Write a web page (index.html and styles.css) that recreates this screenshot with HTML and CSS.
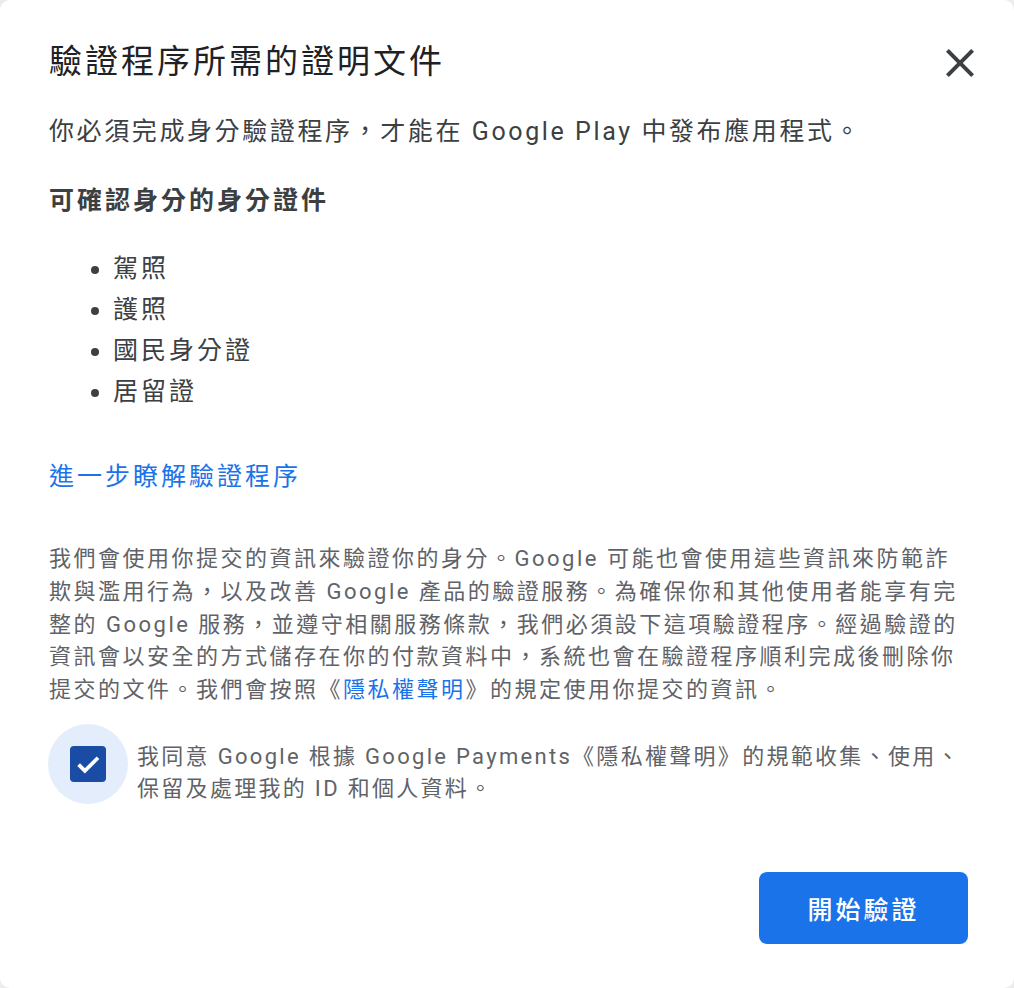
FILE: index.html
```html
<!DOCTYPE html>
<html lang="zh-Hant">
<head>
<meta charset="utf-8">
<title>驗證程序所需的證明文件</title>
<link rel="stylesheet" href="styles.css">
</head>
<body>
<div class="dialog">
  <div class="header">
    <h1 class="title">驗證程序所需的證明文件</h1>
    <button class="close" aria-label="關閉">
      <svg viewBox="0 0 24 24" width="48" height="48"><path fill="#3c4043" d="M19 6.41L17.59 5 12 10.59 6.41 5 5 6.41 10.59 12 5 17.59 6.41 19 12 13.41 17.59 19 19 17.59 13.41 12z"/></svg>
    </button>
  </div>
  <p class="intro">你必須完成身分驗證程序，才能在 Google Play 中發布應用程式。</p>
  <h2 class="subhead">可確認身分的身分證件</h2>
  <ul class="docs">
    <li>駕照</li>
    <li>護照</li>
    <li>國民身分證</li>
    <li>居留證</li>
  </ul>
  <a class="learn" href="#">進一步瞭解驗證程序</a>
  <p class="fine">我們會使用你提交的資訊來驗證你的身分。Google 可能也會使用這些資訊來防範詐欺與濫用行為，以及改善 Google 產品的驗證服務。為確保你和其他使用者能享有完整的 Google 服務，並遵守相關服務條款，我們必須設下這項驗證程序。經過驗證的資訊會以安全的方式儲存在你的付款資料中，系統也會在驗證程序順利完成後刪除你提交的文件。我們會按照《<a href="#">隱私權聲明</a>》的規定使用你提交的資訊。</p>
  <div class="consent">
    <div class="halo">
      <div class="box">
        <svg viewBox="0 0 24 24" width="30" height="30"><path fill="none" stroke="#fff" stroke-width="3" d="M4.5 12.5l5 5L20 7"/></svg>
      </div>
    </div>
    <p class="consent-text">我同意 Google 根據 Google Payments《隱私權聲明》的規範收集、使用、保留及處理我的 ID 和個人資料。</p>
  </div>
  <div class="actions">
    <button class="primary">開始驗證</button>
  </div>
</div>
</body>
</html>
```

FILE: styles.css
```css
* { box-sizing: border-box; }
html, body { margin: 0; padding: 0; }
body {
  background: #ececec;
  font-family: Roboto, "Noto Sans CJK TC", sans-serif;
  color: #3c4043;
}
.dialog {
  width: 1014px;
  height: 988px;
  background: #fff;
  border-radius: 10px;
  padding: 37px 46px 44px 49px;
  display: flex;
  flex-direction: column;
}
.header {
  display: flex;
  align-items: center;
  justify-content: space-between;
}
.title {
  margin: 0;
  font-size: 33px;
  line-height: 44px;
  font-weight: 400;
  letter-spacing: 3px;
  color: #202124;
}
.close {
  border: 0;
  background: none;
  padding: 0;
  margin-right: -16px;
  margin-top: 2px;
  width: 48px;
  height: 48px;
  display: flex;
}
.intro {
  margin: 27px 0 0;
  font-size: 25px;
  line-height: 36px;
  letter-spacing: 2.6px;
}
.subhead {
  margin: 33px 0 0;
  font-size: 25px;
  line-height: 36px;
  font-weight: 700;
  letter-spacing: 3px;
}
.docs {
  margin: 29px 0 0;
  padding-left: 64px;
  font-size: 25px;
  line-height: 41px;
  letter-spacing: 3px;
}
.learn {
  margin-top: 47px;
  font-size: 25px;
  line-height: 36px;
  letter-spacing: 3px;
  color: #1a73e8;
  text-decoration: none;
  align-self: flex-start;
}
.fine {
  margin: 48px 0 0;
  font-size: 22px;
  line-height: 32.75px;
  letter-spacing: 2.5px;
  color: #5f6368;
}
.fine a { color: #1a73e8; text-decoration: none; }
.consent {
  margin-top: 17px;
  display: flex;
  align-items: flex-start;
  gap: 9px;
}
.halo {
  flex: none;
  width: 80px;
  height: 80px;
  margin-left: -1px;
  border-radius: 50%;
  background: #e3edfb;
  display: flex;
  align-items: center;
  justify-content: center;
}
.box {
  width: 36px;
  height: 36px;
  border-radius: 4px;
  background: #1a4ca6;
  display: flex;
  align-items: center;
  justify-content: center;
}
.consent-text {
  flex: 1;
  margin: 17px 0 0;
  font-size: 22px;
  line-height: 32px;
  letter-spacing: 2.3px;
  color: #5f6368;
}
.actions {
  margin-top: auto;
  display: flex;
  justify-content: flex-end;
}
.primary {
  width: 209px;
  height: 72px;
  border: 0;
  border-radius: 8px;
  background: #1a73e8;
  color: #fff;
  font-family: Roboto, "Noto Sans CJK TC", sans-serif;
  font-size: 25px;
  font-weight: 500;
  letter-spacing: 3px;
}
```
